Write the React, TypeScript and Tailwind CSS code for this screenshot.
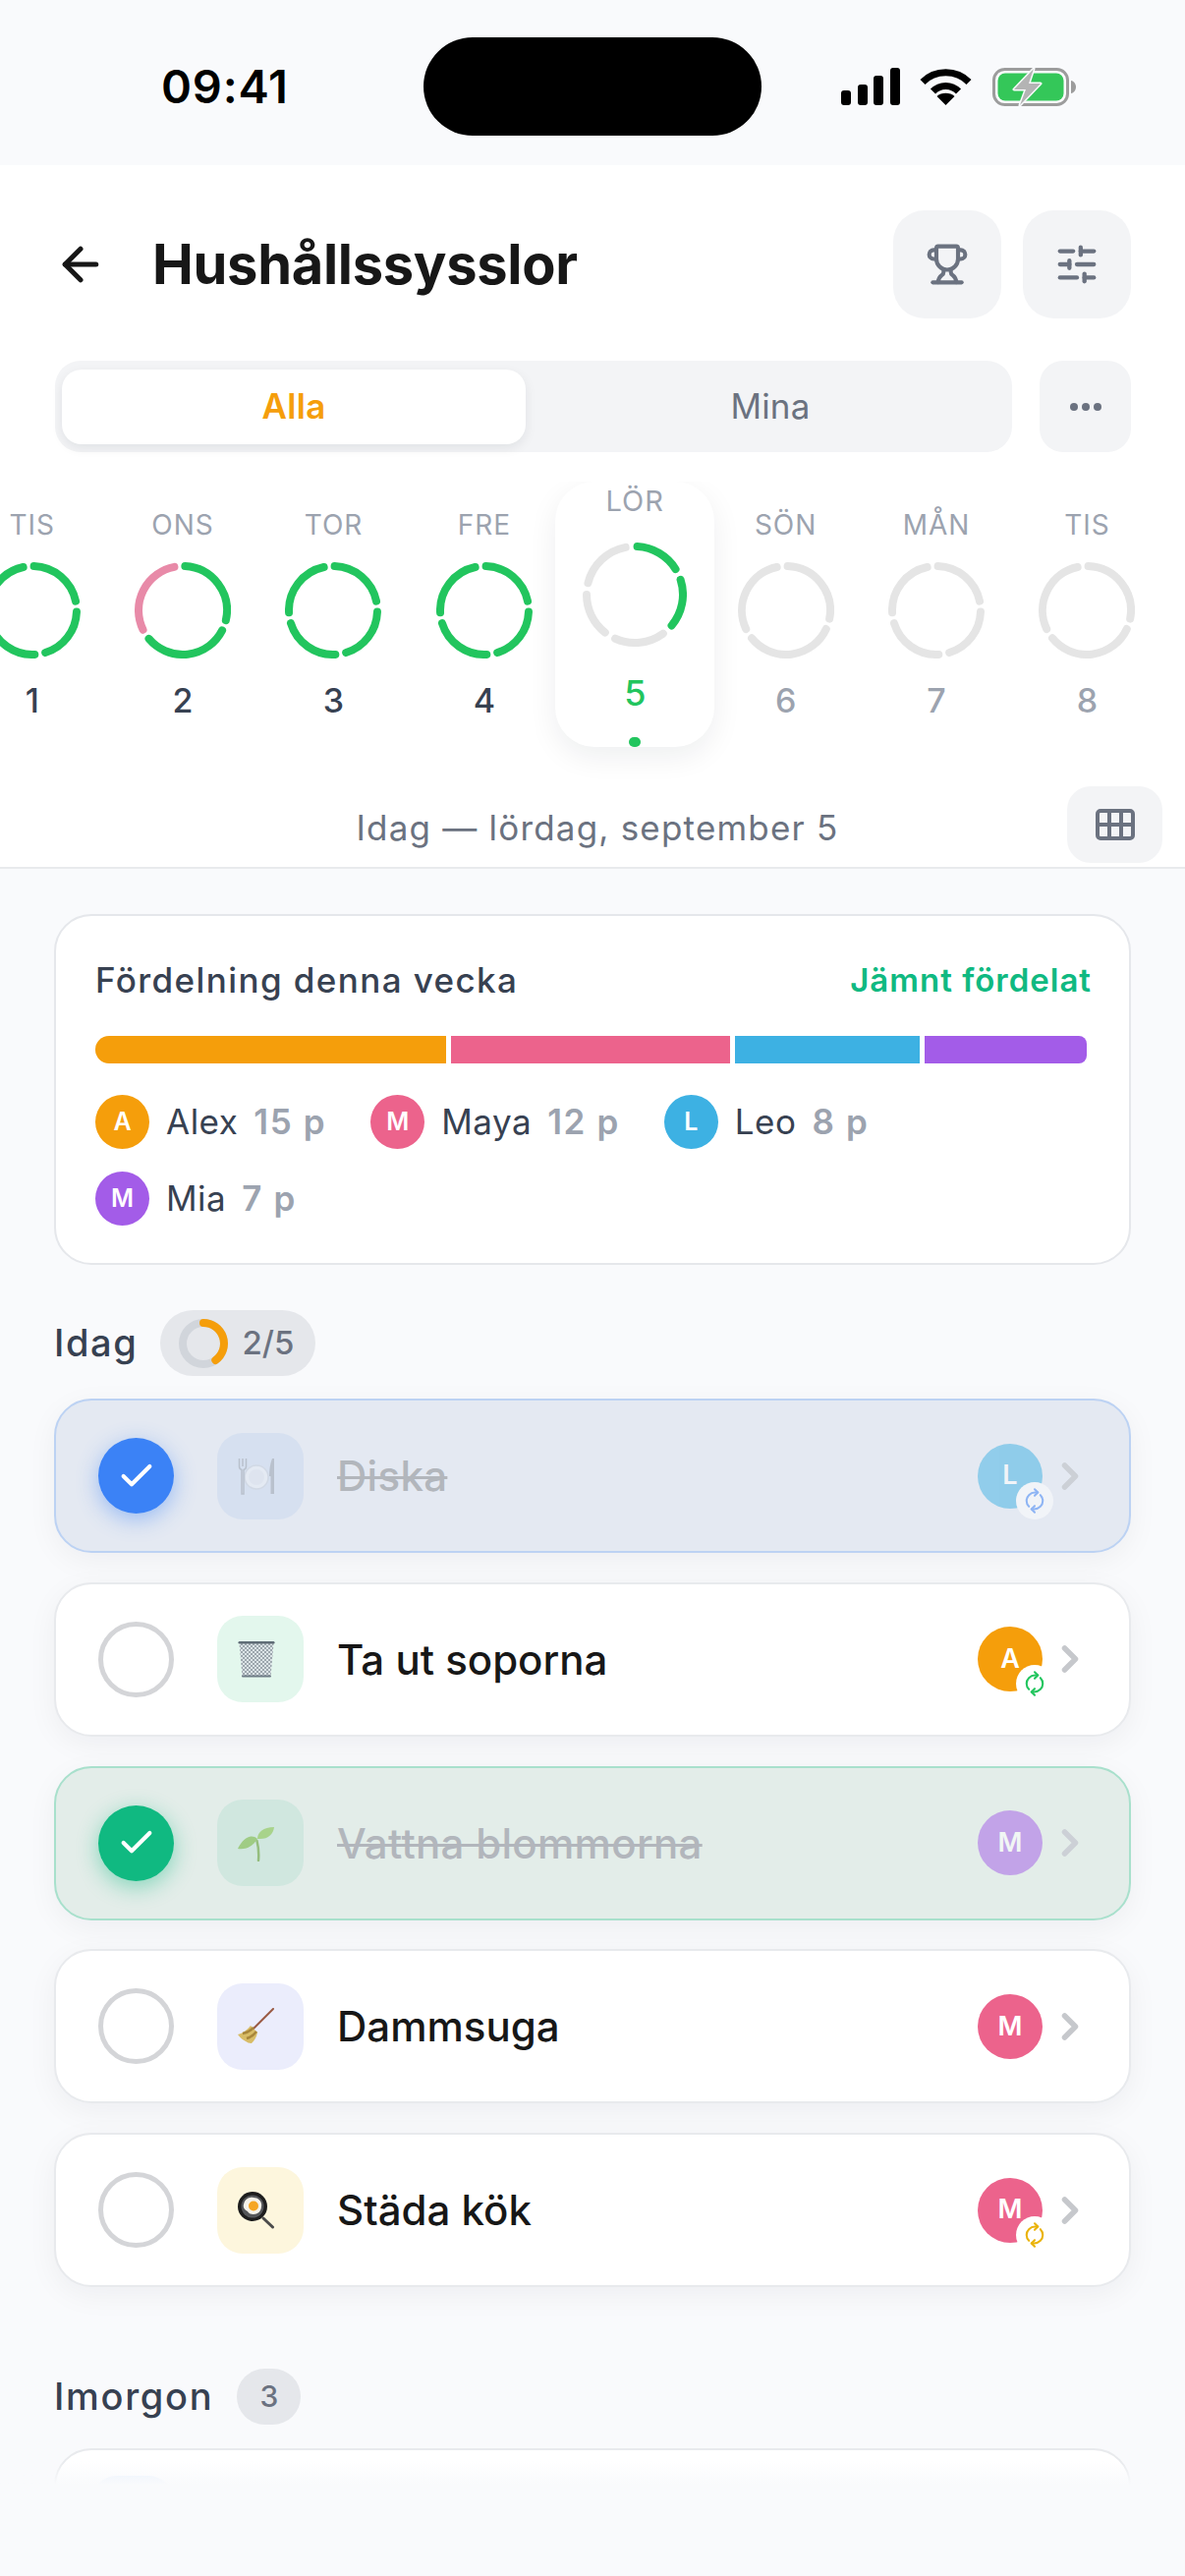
import { ArrowLeft, Check, ChevronRight, RefreshCw, SlidersHorizontal, Trophy } from 'lucide-react'
import type { ReactNode } from 'react'

type Ring = { label: string; num: number; cuts: number[]; colors: string[]; muted?: boolean }

const GREEN = '#22c55e'
const GRAY = '#e5e5e5'
const PINK = '#e88aa8'

const days: Ring[] = [
  { label: 'TIS', num: 1, cuts: [-5, 85, 170, 260], colors: [GREEN, GREEN, GREEN, GREEN] },
  { label: 'ONS', num: 2, cuts: [-4, 110, 237], colors: [GREEN, GREEN, PINK] },
  { label: 'TOR', num: 3, cuts: [-5, 85, 170, 260], colors: [GREEN, GREEN, GREEN, GREEN] },
  { label: 'FRE', num: 4, cuts: [-5, 85, 170, 260], colors: [GREEN, GREEN, GREEN, GREEN] },
  { label: 'LÖR', num: 5, cuts: [-4, 65, 137, 211, 277], colors: [GREEN, GREEN, GRAY, GRAY, GRAY] },
  { label: 'SÖN', num: 6, cuts: [-5, 108, 238], colors: [GRAY, GRAY, GRAY], muted: true },
  { label: 'MÅN', num: 7, cuts: [-5, 85, 170, 260], colors: [GRAY, GRAY, GRAY, GRAY], muted: true },
  { label: 'TIS', num: 8, cuts: [-5, 108, 238], colors: [GRAY, GRAY, GRAY], muted: true },
]

function polar(r: number, deg: number, c: number) {
  const a = ((deg - 90) * Math.PI) / 180
  return `${(c + r * Math.cos(a)).toFixed(2)} ${(c + r * Math.sin(a)).toFixed(2)}`
}

function SegmentRing({ size, cuts, colors }: { size: number; cuts: number[]; colors: string[] }) {
  const c = size / 2
  const r = c - 4
  const gap = 7
  return (
    <svg width={size} height={size} viewBox={`0 0 ${size} ${size}`} fill="none">
      {cuts.map((start, i) => {
        const end = i === cuts.length - 1 ? cuts[0] + 360 : cuts[i + 1]
        const large = end - start - gap * 2 > 180 ? 1 : 0
        return (
          <path
            key={i}
            d={`M${polar(r, start + gap, c)} A${r} ${r} 0 ${large} 1 ${polar(r, end - gap, c)}`}
            stroke={colors[i]}
            strokeWidth={8}
            strokeLinecap="round"
          />
        )
      })}
    </svg>
  )
}

function StatusIcons() {
  return (
    <div className="flex items-start">
      <svg width="60" height="38" viewBox="0 0 60 38" fill="#000">
        <rect x="0" y="23" width="10" height="15" rx="3" />
        <rect x="17" y="17" width="10" height="21" rx="3" />
        <rect x="33" y="8" width="10" height="30" rx="3" />
        <rect x="50" y="0" width="10" height="38" rx="3" />
      </svg>
      <svg className="ml-[20px]" width="53" height="38" viewBox="0 0 53 38" fill="none" stroke="#000" strokeWidth="7">
        <path d="M3 14.5C15.5 1.5 37.5 1.5 50 14.5" />
        <path d="M13.5 24C20.5 16.5 32.5 16.5 39.5 24" />
        <path d="M26.5 38L17.5 29C22 24.6 31 24.6 35.5 29Z" fill="#000" stroke="none" />
      </svg>
      <svg className="ml-[21px]" width="85" height="39" viewBox="0 0 85 39" fill="none">
        <rect x="1.5" y="1.5" width="75" height="36" rx="11" stroke="#9c9c9c" strokeWidth="3" />
        <rect x="5.5" y="5.5" width="67" height="28" rx="7.5" fill="#34c759" />
        <path d="M80 13c3 .6 5 3.200 5 6.500s-2 5.900-5 6.500z" fill="#9c9c9c" />
        <path
          d="M42 1L22 22h12l-6 16 21-22H37z"
          fill="#b4b4b4"
          stroke="#f9fafc"
          strokeWidth="3"
          strokeLinejoin="round"
          paintOrder="stroke"
        />
      </svg>
    </div>
  )
}

function PlateIcon() {
  return (
    <svg width="38" height="38" viewBox="0 0 38 38" fill="none">
      <circle cx="19" cy="20" r="12" fill="#eef1f6" stroke="#cfd5de" strokeWidth="1.500" />
      <circle cx="19" cy="20" r="8" fill="#e4e8ef" />
      <path d="M1.500 1v8c0 2 1 3 2.500 3.500V37h2V12.500C7.500 12 8.500 11 8.500 9V1" stroke="#a7adb6" strokeWidth="1.500" />
      <path d="M5 1v8" stroke="#a7adb6" strokeWidth="1.500" />
      <path d="M35 1c-2 5-3 11-3 18h1.500v18H37V1z" fill="#a7adb6" />
    </svg>
  )
}

function TrashIcon() {
  return (
    <svg width="38" height="38" viewBox="0 0 38 38" fill="none">
      <defs>
        <pattern id="mesh" width="4" height="4" patternUnits="userSpaceOnUse">
          <path d="M0 0l4 4M4 0L0 4" stroke="#8b979e" strokeWidth="0.800" />
        </pattern>
      </defs>
      <path d="M1.500 3h35l-3 34h-29z" fill="#dbe3e6" />
      <path d="M1.500 3h35l-3 34h-29z" fill="url(#mesh)" />
      <rect x="0.500" y="1" width="37" height="2.500" rx="1.250" fill="#5f6c76" />
      <rect x="4" y="35.500" width="30" height="2" rx="1" fill="#6f7c86" />
    </svg>
  )
}

function SeedlingIcon() {
  return (
    <svg width="38" height="38" viewBox="0 0 38 38" fill="none">
      <path d="M21 37c.5-6 .3-13-1.500-20" stroke="#6ea33f" strokeWidth="2.500" strokeLinecap="round" />
      <path d="M20 15C20 8 26 3 37 3c-1 7-6 13-17 12z" fill="#8ec653" />
      <path d="M20 15C13 9 5 15 0 25c8 1 15-2 20-10z" fill="#7fbb48" />
    </svg>
  )
}

function BroomIcon() {
  return (
    <svg width="38" height="38" viewBox="0 0 38 38" fill="none">
      <path d="M36 1L16 21" stroke="#9a5a44" strokeWidth="2" strokeLinecap="round" />
      <path d="M13 18l7 7c-1 5-3 8-6 11-3 0-4-1-6-2s-5-3-8-7c5-1 10-5 13-9z" fill="#d8bc66" />
      <path d="M5 26c4-.5 8-3 11-6M9 31c4-1 7-3 10-7" stroke="#a8863a" strokeWidth="2.500" />
    </svg>
  )
}

function PanIcon() {
  return (
    <svg width="38" height="38" viewBox="0 0 38 38" fill="none">
      <path d="M26 27l9.500 9" stroke="#4b4b4b" strokeWidth="3" strokeLinecap="round" />
      <circle cx="15" cy="15" r="15" fill="#1d1d1d" />
      <circle cx="15" cy="15" r="11.500" fill="#55575a" />
      <path d="M6 13c1-5 5-8 10-7 5 0 9 4 8 9 0 5-4 8-8 8-3 0-5-1-6-3-3-1-5-4-4-7z" fill="#f6f3ea" />
      <circle cx="16" cy="14.500" r="5" fill="#f5a623" />
    </svg>
  )
}

function Avatar({ letter, color, size = 'legend' }: { letter: string; color: string; size?: 'legend' | 'task' }) {
  return (
    <div
      className={`flex shrink-0 items-center justify-center rounded-full font-semibold text-white ${
        size === 'legend' ? 'h-[55px] w-[55px] text-[25px]' : 'h-[66px] w-[66px] text-[27px]'
      } ${color}`}
    >
      {letter}
    </div>
  )
}

type Task = {
  title: string
  icon: ReactNode
  tile: string
  letter: string
  avatar: string
  repeat?: string
  done?: 'blue' | 'green'
}

const tasks: Task[] = [
  { title: 'Diska', icon: <PlateIcon />, tile: 'bg-[#d6e0f0]', letter: 'L', avatar: 'bg-[#3db1e3]', repeat: 'text-[#3b82f6]', done: 'blue' },
  { title: 'Ta ut soporna', icon: <TrashIcon />, tile: 'bg-[#e3f7ed]', letter: 'A', avatar: 'bg-[#f59e0b]', repeat: 'text-[#22c55e]' },
  { title: 'Vattna blommorna', icon: <SeedlingIcon />, tile: 'bg-[#d0e7df]', letter: 'M', avatar: 'bg-[#a35ce8]', done: 'green' },
  { title: 'Dammsuga', icon: <BroomIcon />, tile: 'bg-[#ebedfc]', letter: 'M', avatar: 'bg-[#ec638c]' },
  { title: 'Städa kök', icon: <PanIcon />, tile: 'bg-[#fdf6dd]', letter: 'M', avatar: 'bg-[#ec638c]', repeat: 'text-[#eab308]' },
]

function TaskRow({ task }: { task: Task }) {
  const cardTone =
    task.done === 'blue'
      ? 'border-[#bcd2f3] bg-[#e4e9f2]'
      : task.done === 'green'
        ? 'border-[#a8e0cc] bg-[#e3ede9]'
        : 'border-[#e8eaed] bg-white'

  return (
    <div
      className={`flex h-[157px] items-center rounded-[38px] border-2 pl-[43px] pr-[38px] shadow-[0_8px_30px_rgba(17,24,39,0.05)] ${cardTone}`}
    >
      {task.done ? (
        <div
          className={`flex h-[77px] w-[77px] shrink-0 items-center justify-center rounded-full text-white ${
            task.done === 'blue'
              ? 'bg-[#3b82f6] shadow-[0_6px_22px_rgba(59,130,246,0.45)]'
              : 'bg-[#10b981] shadow-[0_6px_22px_rgba(16,185,129,0.45)]'
          }`}
        >
          <Check size={40} strokeWidth={2.5} />
        </div>
      ) : (
        <div className="h-[77px] w-[77px] shrink-0 rounded-full border-[5px] border-[#d4d5d8]" />
      )}

      <div className={`ml-[44px] flex h-[88px] w-[88px] shrink-0 items-center pl-[21px] rounded-[26px] ${task.tile}`}>
        <div className={task.done ? 'opacity-60' : ''}>{task.icon}</div>
      </div>

      <span
        className={`ml-[34px] flex-1 text-[42px] font-medium ${
          task.done ? 'text-[#b2b6bc] tracking-[0.3px] line-through decoration-[3px]' : 'text-[#171717]'
        }`}
      >
        {task.title}
      </span>

      <div className={`relative ${task.done ? 'opacity-50' : ''}`}>
        <Avatar letter={task.letter} color={task.avatar} size="task" />
        {task.repeat && (
          <div className="absolute -bottom-[11px] -right-[11px] flex h-[38px] w-[38px] items-center justify-center rounded-full bg-white">
            <RefreshCw size={22} strokeWidth={2.25} className={`-rotate-45 ${task.repeat}`} />
          </div>
        )}
      </div>

      <ChevronRight
        size={44}
        strokeWidth={3}
        className={`ml-[6px] shrink-0 ${task.done ? 'text-[#ccd0d6]' : 'text-[#c6c8cc]'}`}
      />
    </div>
  )
}

const legend = [
  { letter: 'A', name: 'Alex', points: '15 p', color: 'bg-[#f59e0b]' },
  { letter: 'M', name: 'Maya', points: '12 p', color: 'bg-[#ec638c]' },
  { letter: 'L', name: 'Leo', points: '8 p', color: 'bg-[#3db1e3]' },
  { letter: 'M', name: 'Mia', points: '7 p', color: 'bg-[#a35ce8]' },
]

export default function App() {
  return (
    <div className="flex h-[2621px] w-[1206px] flex-col overflow-hidden bg-[#f9fafc] font-['Inter',sans-serif]">
      {/* status bar */}
      <div className="relative flex h-[168px] shrink-0 items-start justify-between pl-[164px] pr-[111px] pt-[69px]">
        <span className="text-[47px] font-semibold leading-[38px] tracking-[0.8px] text-black">09:41</span>
        <div className="absolute left-[431px] top-[38px] h-[100px] w-[344px] rounded-[50px] bg-black" />
        <StatusIcons />
      </div>

      {/* header */}
      <div className="shrink-0 border-b-2 border-[#e8eaed] bg-white">
        <div className="flex items-center pl-[55px] pr-[55px] pt-[46px]">
          <ArrowLeft size={54} strokeWidth={2.25} className="text-[#171717]" />
          <h1 className="ml-[46px] flex-1 text-[56px] font-bold leading-[110px] tracking-[-0.3px] text-[#171717]">
            Hushållssysslor
          </h1>
          <button type="button" className="flex h-[110px] w-[110px] items-center justify-center rounded-[32px] bg-[#f3f4f6]">
            <Trophy size={44} strokeWidth={2.25} className="text-[#6b7280]" />
          </button>
          <button type="button" className="ml-[22px] flex h-[110px] w-[110px] items-center justify-center rounded-[32px] bg-[#f3f4f6]">
            <SlidersHorizontal size={46} strokeWidth={2.25} className="text-[#6b7280]" />
          </button>
        </div>

        <div className="mt-[43px] flex items-center pl-[56px] pr-[55px]">
          <div className="flex h-[93px] w-[974px] items-center rounded-[26px] bg-[#f3f4f6] pl-[7px]">
            <div className="flex h-[76px] w-[472px] items-center justify-center rounded-[20px] bg-white text-[35px] font-semibold tracking-[0.3px] text-[#f59e0b] shadow-[0_4px_12px_rgba(17,24,39,0.08)]">
              Alla
            </div>
            <div className="flex flex-1 items-center justify-center pl-[3px] text-[35px] tracking-[0.2px] text-[#6b7280]">Mina</div>
          </div>
          <button type="button" className="ml-[28px] flex h-[93px] w-[93px] items-center justify-center gap-[4px] rounded-[24px] bg-[#f3f4f6]">
            <span className="h-[8px] w-[8px] rounded-full bg-[#6b7280]" />
            <span className="h-[8px] w-[8px] rounded-full bg-[#6b7280]" />
            <span className="h-[8px] w-[8px] rounded-full bg-[#6b7280]" />
          </button>
        </div>

        {/* week strip */}
        <div className="ml-[-44px] mt-[30px] flex h-[310px] overflow-hidden">
          {days.map((d) =>
            d.num === 5 ? (
              <div key={d.num} className="flex h-[300px] w-[153.400px] shrink-0 justify-center">
                <div className="flex h-[270px] w-[162px] shrink-0 flex-col items-center rounded-[40px] bg-white pt-[4px] shadow-[0_10px_30px_rgba(17,24,39,0.07)]">
                  <span className="text-[29px] leading-[32px] tracking-[1px] text-[#9ca3af]">{d.label}</span>
                  <div className="mt-[26px]">
                    <SegmentRing size={106} cuts={d.cuts} colors={d.colors} />
                  </div>
                  <span className="mt-[26px] text-[36px] font-medium leading-[42px] text-[#22c55e]">{d.num}</span>
                  <span className="mt-[24px] h-[12px] w-[12px] rounded-full bg-[#22c55e]" />
                </div>
              </div>
            ) : (
              <div key={`${d.label}${d.num}`} className="flex w-[153.400px] shrink-0 flex-col items-center pt-[28px]">
                <span className="text-[28px] leading-[32px] tracking-[1px] text-[#9ca3af]">{d.label}</span>
                <div className="mt-[22px]">
                  <SegmentRing size={98} cuts={d.cuts} colors={d.colors} />
                </div>
                <span
                  className={`mt-[22px] text-[34px] font-medium leading-[42px] ${d.muted ? 'text-[#9ca3af]' : 'text-[#374151]'}`}
                >
                  {d.num}
                </span>
              </div>
            ),
          )}
        </div>

        <div className="relative flex h-[82px] items-center justify-center pt-[2px]">
          <span className="ml-[10px] text-[35px] tracking-[1.200px] text-[#6b7280]">Idag — lördag, september 5</span>
          <button
            type="button"
            className="absolute right-[23px] top-[0px] flex h-[78px] w-[97px] items-center justify-center rounded-[24px] bg-[#f3f4f6]"
          >
            <svg width="40" height="32" viewBox="0 0 40 32" fill="none" stroke="#6b7280" strokeWidth="4">
              <rect x="2" y="2" width="36" height="28" rx="3" />
              <path d="M14 2v28M26 2v28M2 16h36" />
            </svg>
          </button>
        </div>
      </div>

      {/* scrolling content */}
      <div className="relative min-h-0 flex-1 overflow-hidden px-[55px] pt-[46px]">
        <section className="h-[357px] rounded-[38px] border-2 border-[#e5e7eb] bg-white pl-[40px] pr-[40px] pt-[41px]">
          <div className="flex items-center justify-between">
            <span className="text-[35px] font-medium leading-[48px] tracking-[1.400px] text-[#374151]">Fördelning denna vecka</span>
            <span className="mr-[-2px] text-[33px] font-semibold leading-[48px] tracking-[1px] text-[#10b981]">Jämnt fördelat</span>
          </div>
          <div className="mt-[33px] flex h-[28px] w-[1009px] gap-[5px] overflow-hidden rounded-l-[14px] rounded-r-[8px]">
            <div className="w-[357px] bg-[#f59e0b]" />
            <div className="w-[284px] bg-[#ec638c]" />
            <div className="w-[188px] bg-[#3db1e3]" />
            <div className="flex-1 bg-[#a35ce8]" />
          </div>
          <div className="mt-[32px] flex w-[800px] flex-wrap gap-x-[45px] gap-y-[23px]">
            {legend.map((p) => (
              <div key={p.name} className="flex items-center">
                <Avatar letter={p.letter} color={p.color} />
                <span className="ml-[17px] text-[35px] tracking-[0.5px] text-[#374151]">{p.name}</span>
                <span className="ml-[16px] text-[35px] font-semibold tracking-[1.600px] text-[#9ca3af]">{p.points}</span>
              </div>
            ))}
          </div>
        </section>

        <div className="mt-[46px] flex items-center">
          <h2 className="text-[38px] font-medium tracking-[1.600px] text-[#374151]">Idag</h2>
          <div className="ml-[23px] flex h-[67px] w-[158px] items-center rounded-full bg-[#e5e7eb] pl-[18px]">
            <svg width="52" height="52" viewBox="0 0 52 52" fill="none">
              <circle cx="26" cy="26" r="21" stroke="#d1d5db" strokeWidth="8" />
              <path d="M26 5A21 21 0 0 1 38.300 43" stroke="#f59e0b" strokeWidth="8" strokeLinecap="round" />
            </svg>
            <span className="ml-[13px] text-[33px] font-medium text-[#6b7280]">2/5</span>
          </div>
        </div>

        <div className="mt-[23px] flex flex-col gap-[29.750px]">
          {tasks.map((t) => (
            <TaskRow key={t.title} task={t} />
          ))}
        </div>

        <div className="mt-[83px] flex items-center">
          <h2 className="text-[38px] font-medium tracking-[1.700px] text-[#374151]">Imorgon</h2>
          <div className="ml-[24px] flex h-[57px] w-[65px] items-center justify-center rounded-full bg-[#e5e7eb] text-[30px] font-medium text-[#6b7280]">
            3
          </div>
        </div>

        <div className="mt-[24px] h-[157px] rounded-[38px] border-2 border-[#e8eaed] bg-white pl-[36px] pt-[26px]">
          <div className="h-[84px] w-[84px] rounded-[26px] bg-[#e8f1fd]" />
        </div>

        {/* fade where the list runs under the bottom edge */}
        <div className="absolute bottom-0 left-0 right-0 h-[24px] bg-gradient-to-b from-transparent to-[#f9fafc]" />
      </div>

      <div className="h-[93px] shrink-0 bg-[#f9fafc]" />
    </div>
  )
}
